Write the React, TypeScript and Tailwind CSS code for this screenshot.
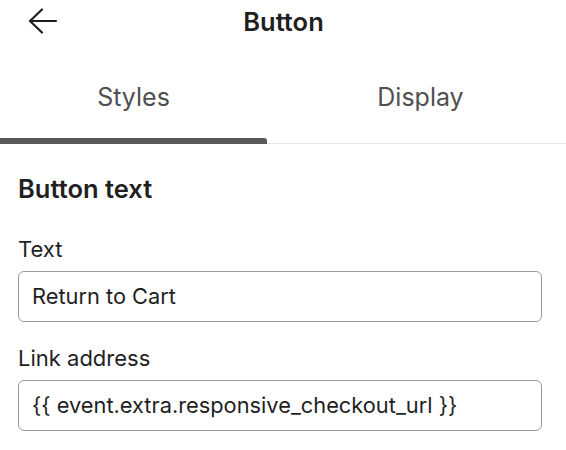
export default function App() {
  return (
    <div className="relative h-[450px] w-[566px] overflow-hidden bg-white font-['Inter',sans-serif] text-[#1f1f1f]">
      {/* Header */}
      <div className="relative flex h-[43px] items-center justify-center">
        <button className="absolute left-[28px] top-[8px] text-[#1f1f1f]">
          <svg width="30" height="26" viewBox="0 0 30 26" fill="none" stroke="currentColor" strokeWidth="2.2" strokeLinecap="round" strokeLinejoin="round">
            <path d="M28 13H2" />
            <path d="M14 1.5 2 13l12 11.5" />
          </svg>
        </button>
        <h1 className="pl-[1px] text-[25.5px] font-semibold leading-none">Button</h1>
      </div>

      {/* Tabs */}
      <div className="relative flex h-[101px] border-b border-[#e6e6e6]">
        <div className="relative flex w-[267px] items-center justify-center pt-[10px]">
          <span className="text-[25px] text-[#4f4f4f]">Styles</span>
          <div className="absolute bottom-[-1px] left-0 h-[6px] w-full rounded-tr-[3px] bg-[#595959]" />
        </div>
        <div className="flex flex-1 items-center justify-center pl-[8px] pt-[10px]">
          <span className="text-[25px] text-[#4f4f4f]">Display</span>
        </div>
      </div>

      {/* Body */}
      <div className="px-[18px] pt-[30px]">
        <h2 className="text-[25.5px] font-semibold leading-[30px]">Button text</h2>

        <label className="mt-[32px] block text-[22px] leading-[26px]">Text</label>
        <div className="mt-[9px] flex h-[51px] w-[524px] items-center rounded-[6px] border border-[#9a9a9a] px-[13px] text-[21.8px]">
          Return to Cart
        </div>

        <label className="mt-[23px] block text-[22px] leading-[26px]">Link address</label>
        <div className="mt-[9px] flex h-[51px] w-[524px] items-center rounded-[6px] border border-[#9a9a9a] px-[13px] text-[21.8px]">
          {'{{ event.extra.responsive_checkout_url }}'}
        </div>
      </div>
    </div>
  );
}
